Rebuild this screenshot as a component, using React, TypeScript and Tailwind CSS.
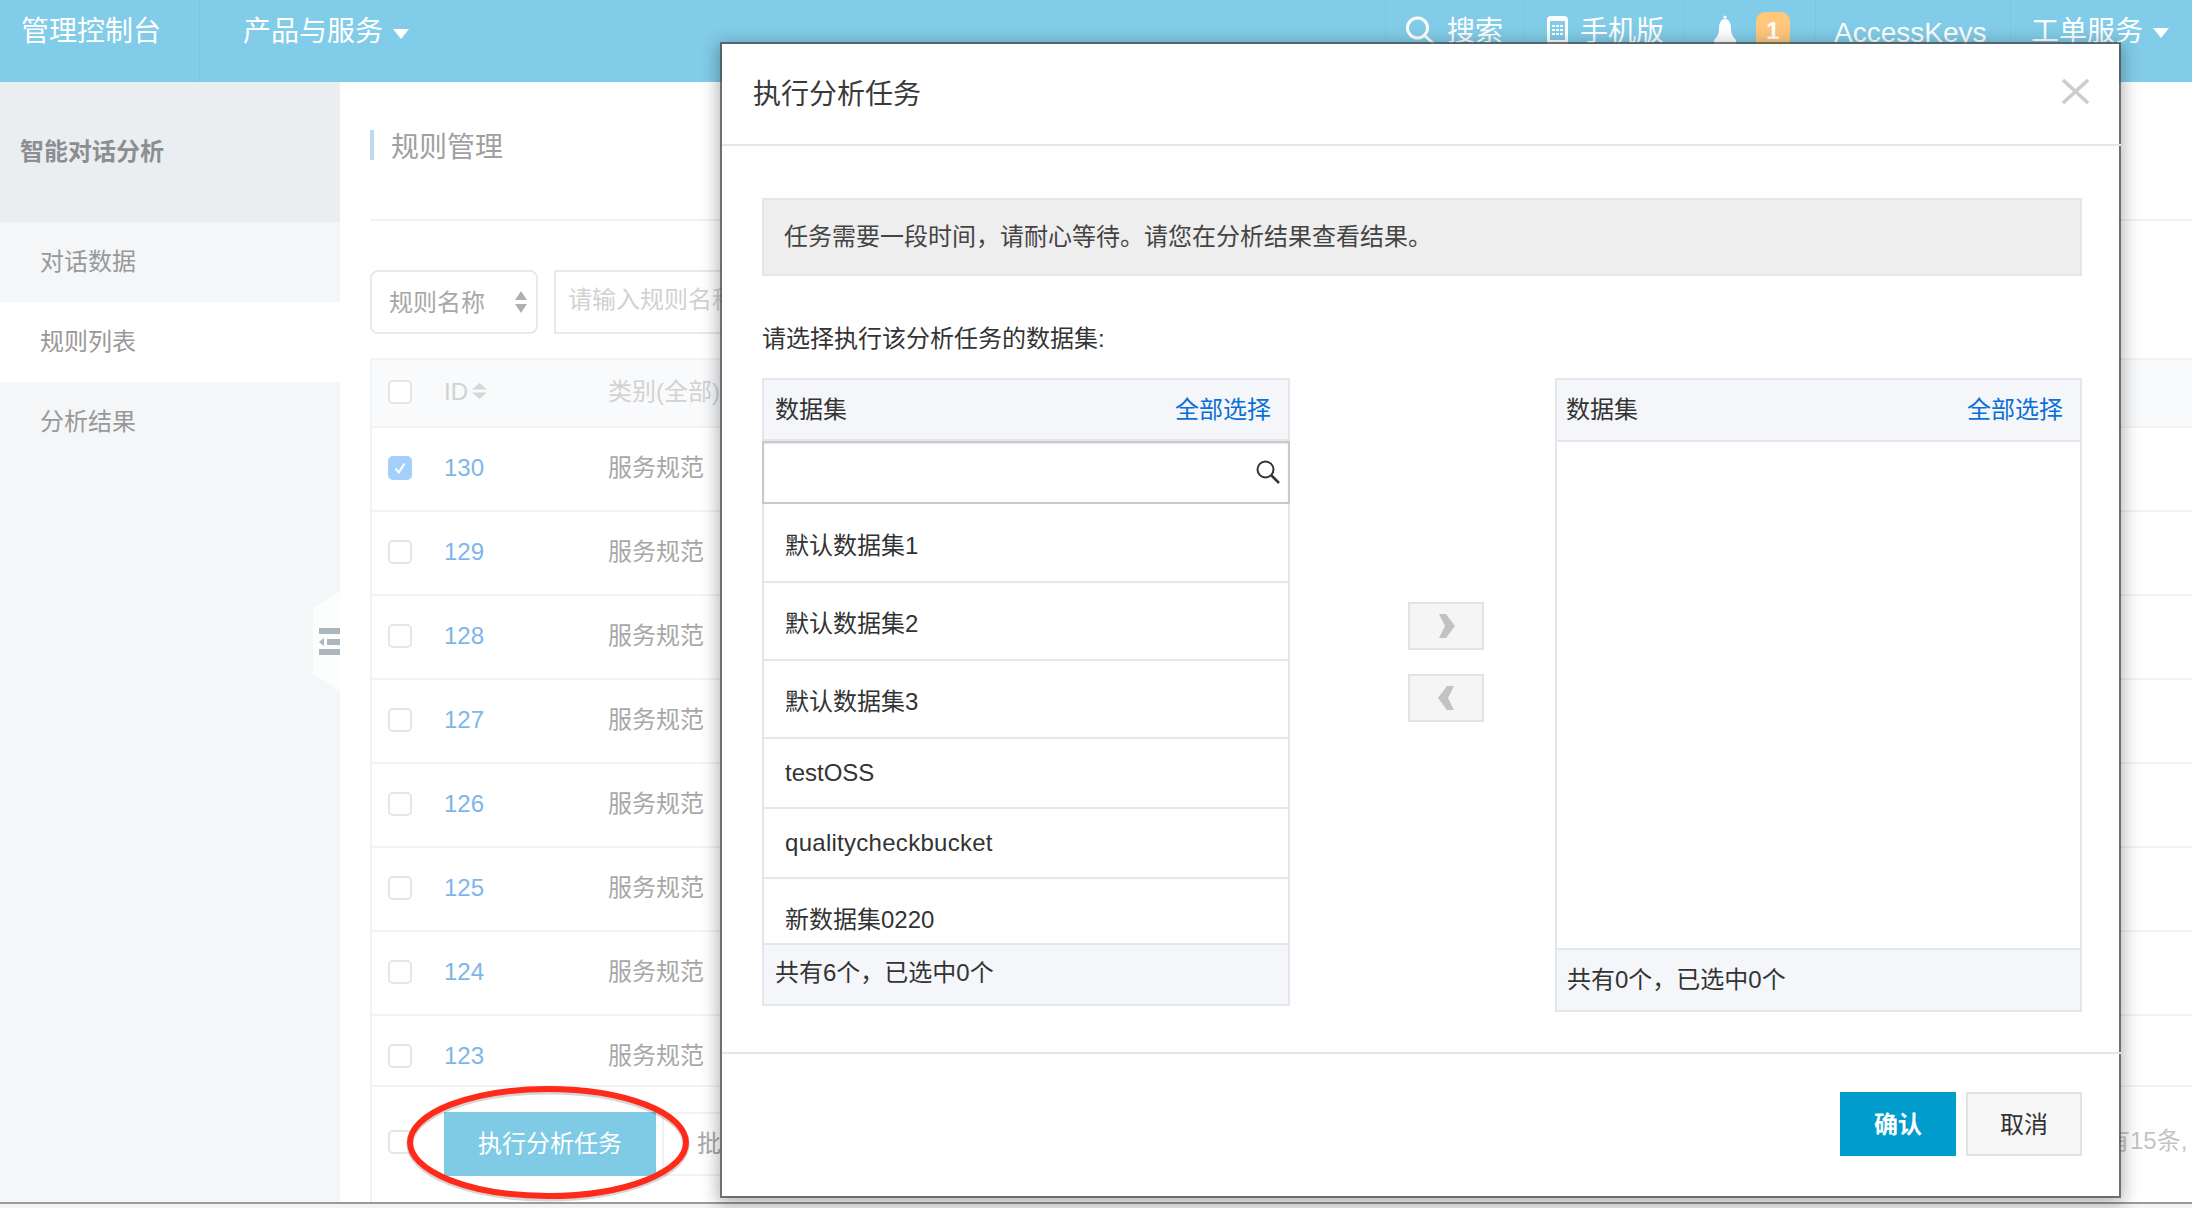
const rows = ["130", "129", "128", "127", "126", "125", "124", "123"]

function Check({ on }: { on?: boolean }) {
    if (on) {
        return (
            <div className="w-6 h-6 rounded-[5px] bg-[#a3cffa] flex items-center justify-center shrink-0">
                <svg width="16" height="16" viewBox="0 0 16 16" fill="none" stroke="#fff" strokeWidth="2">
                    <path d="M3.5 8.5 L6.8 12.5 L12.5 3.5" />
                </svg>
            </div>
        )
    }
    return <div className="w-6 h-6 rounded-[5px] border-2 border-[#e6e6e6] bg-white shrink-0"></div>
}

function Updown({ color, w, h }: { color: string; w: number; h: number }) {
    return (
        <svg width={w} height={h} viewBox="0 0 12 22" preserveAspectRatio="none" fill={color}>
            <path d="M6 0 L12 9 L0 9 Z M0 13 L12 13 L6 22 Z" />
        </svg>
    )
}

function Caret() {
    return (
        <svg width="16" height="10" viewBox="0 0 16 10" fill="#fff">
            <path d="M0 0 L16 0 L8 10 Z" />
        </svg>
    )
}

function TopBar() {
    return (
        <div className="h-[82px] bg-[#81cce8] flex text-white text-[28px] leading-[36px] shrink-0">
            <div className="w-[200px] pl-[21px] pt-[14px] border-r border-[#7bc7e3]">管理控制台</div>
            <div className="pl-[43px] pt-[14px] flex items-start">
                产品与服务
                <div className="ml-[10px] mt-[15px]"><Caret /></div>
            </div>
            <div className="ml-auto flex">
                <div className="w-[138px] pl-[20px] pt-[14px] border-l border-[#7bc7e3] flex items-start">
                    <svg className="mt-[2px]" width="30" height="30" viewBox="0 0 30 30" fill="none" stroke="#fff" strokeWidth="3">
                        <circle cx="11.5" cy="12" r="10" />
                        <path d="M18.5 19.5 L28 28" />
                    </svg>
                    <span className="ml-[11px]">搜索</span>
                </div>
                <div className="w-[160px] pl-[23px] pt-[14px] border-l border-[#7bc7e3] flex items-start">
                    <svg className="mt-[2px]" width="21" height="30" viewBox="0 0 21 30">
                        <rect x="0" y="0" width="21" height="30" rx="4" fill="#fff" />
                        <rect x="3" y="5" width="15" height="19" fill="#81cce8" />
                        <path d="M5 10 H16 M5 14 H16 M5 18 H16" stroke="#fff" strokeWidth="2" strokeDasharray="3 1" />
                    </svg>
                    <span className="ml-[12px]">手机版</span>
                </div>
                <div className="w-[132px] pl-[29px] border-l border-[#7bc7e3] flex items-start">
                    <svg className="mt-[15px]" width="24" height="30" viewBox="0 0 24 30" fill="#fff">
                        <circle cx="12" cy="2" r="1.6" />
                        <path d="M12 4 C7.5 4 6 9 6 14 C6 19 4 22 1 25 L1 30 L23 30 L23 25 C20 22 18 19 18 14 C18 9 16.5 4 12 4 Z" />
                    </svg>
                    <div className="ml-[19px] mt-[12px] w-[34px] h-[36px] rounded-t-[9px] bg-[#ffc77c] text-[24px] font-bold leading-[38px] text-center">1</div>
                </div>
                <div className="w-[195px] pl-[18px] pt-[15px] border-l border-[#7bc7e3]">AccessKeys</div>
                <div className="w-[182px] pl-[20px] pt-[14px] border-l border-[#7bc7e3] flex items-start">
                    工单服务
                    <div className="ml-[10px] mt-[14px]"><Caret /></div>
                </div>
            </div>
        </div>
    )
}

function Sidebar() {
    return (
        <div className="w-[340px] bg-[#f4f6f8] text-[24px] text-[#999999] shrink-0">
            <div className="h-[140px] bg-[#ebeef1] pl-[20px] flex items-center font-bold text-[#8c8f92]">智能对话分析</div>
            <div className="h-20 pl-10 flex items-center">对话数据</div>
            <div className="h-20 pl-10 flex items-center bg-white">规则列表</div>
            <div className="h-20 pl-10 flex items-center">分析结果</div>
        </div>
    )
}

function MainPage() {
    return (
        <div className="flex-1 min-w-0 bg-white pl-[30px] text-[24px] text-[#a8a8a8]">
            <div className="h-[139px] pt-[48px] border-b-2 border-[#f0f1f2]">
                <div className="h-[30px] border-l-4 border-[#bcd9ef] pl-[17px] text-[28px] leading-[35px] text-[#a0a0a0]">规则管理</div>
            </div>
            <div className="flex mt-[49px] gap-4 h-16">
                <div className="w-[168px] rounded-lg border-2 border-[#e8e9ea] pl-[17px] pr-[9px] flex items-center justify-between">
                    <span className="pt-[2px]">规则名称</span>
                    <Updown color="#b0b0b0" w={12} h={22} />
                </div>
                <div className="w-[300px] border-2 border-[#e8e9ea] pl-3 pb-1 flex items-center text-[#d2d2d2]">请输入规则名称</div>
            </div>
            <div className="mt-6 border-l-2 border-[#f1f3f5]">
                <div className="h-[70px] bg-[#f9fafb] border-y-2 border-[#f1f3f5] pl-4 pt-5 flex items-start text-[#d2d2d2]">
                    <Check />
                    <span className="w-[164px] ml-[32px] flex items-center h-6">
                        ID
                        <span className="ml-[4px] mb-[2px]"><Updown color="#d6d6d6" w={15} h={16} /></span>
                    </span>
                    <span className="h-6 leading-6">类别(全部)</span>
                </div>
                {rows.map((id, i) => (
                    <div key={id} className={(i == 7 ? "h-[71px]" : "h-[84px]") + " border-b-2 border-[#f1f3f5] pl-4 pt-[28px] flex items-start"}>
                        <Check on={i == 0} />
                        <span className="w-[164px] ml-[32px] h-6 leading-6 text-[#7db6ea]">{id}</span>
                        <span className="h-6 leading-6">服务规范</span>
                    </div>
                ))}
                <div className="h-[115px] pl-4 pt-[25px] flex items-start">
                    <div className="mt-[18px]"><Check /></div>
                    <button className="ml-8 w-[212px] h-16 bg-[#7fcbe6] text-white">执行分析任务</button>
                    <button className="ml-[6px] h-16 border-2 border-[#f1f2f3] px-[33px] text-[#a8a8a8]">批量删除</button>
                    <span className="ml-auto mt-[17px] w-[110px] h-6 leading-6 whitespace-nowrap text-[#c4c4c4]">共有15条,</span>
                </div>
            </div>
        </div>
    )
}

function ListHead({ h, pl }: { h: string; pl: string }) {
    return (
        <div className={h + " " + pl + " bg-[#f4f6f9] border-b-2 border-[#e3e6ea] pr-[17px] flex items-center justify-between shrink-0"}>
            <span>数据集</span>
            <span className="text-[#0a6fd6]">全部选择</span>
        </div>
    )
}

function Modal() {
    const items = [
        { name: "默认数据集1", cls: "h-[79px] flex items-center border-b-2 pt-[6px]" },
        { name: "默认数据集2", cls: "h-[78px] flex items-center border-b-2 pt-[6px]" },
        { name: "默认数据集3", cls: "h-[78px] flex items-center border-b-2 pt-[6px]" },
        { name: "testOSS", cls: "h-[70px] flex items-center border-b-2" },
        { name: "qualitycheckbucket", cls: "h-[70px] flex items-center border-b-2 tracking-[0.28px]" },
        { name: "新数据集0220", cls: "h-[78px] pt-[23px]" },
    ]
    return (
        <div className="absolute left-[722px] top-[44px] w-[1397px] h-[1152px] bg-white text-[24px] text-[#333333] shadow-[0_0_0_2px_rgba(70,70,70,0.7),0_4px_16px_4px_rgba(0,0,0,0.3)]">
            <div className="h-[102px] border-b-2 border-[#e5e6e8] pl-[31px] pr-[30px] flex items-center justify-between -mr-[2px]">
                <span className="text-[28px] text-[#3a3a3a] pt-[2px]">执行分析任务</span>
                <svg className="mr-[2px] -mt-[5px]" width="27" height="25" viewBox="0 0 27 25" fill="none" stroke="#cccccc" strokeWidth="3.5">
                    <path d="M1 1 L26 24 M26 1 L1 24" />
                </svg>
            </div>
            <div className="h-[908px] pl-10 pr-[39px] pt-[52px] border-b-2 border-[#e5e6e8] -mr-[2px]">
                <div className="h-[78px] bg-[#eeeeee] border-2 border-[#e3e6ea] pl-5 flex items-center text-[#444444]">任务需要一段时间，请耐心等待。请您在分析结果查看结果。</div>
                <div className="mt-[48px] h-[30px] leading-[30px]">请选择执行该分析任务的数据集:</div>
                <div className="mt-[24px] flex items-start">
                    <div className="w-[528px] h-[628px] border-2 border-[#e3e6ea] flex flex-col">
                        <ListHead h="h-[61px]" pl="pl-[11px]" />
                        <div className="h-[63px] -mx-[2px] border-2 border-[#c9c9c9] flex items-center justify-end pr-[8px] pb-[2px] shadow-[inset_0_1px_2px_rgba(0,0,0,0.1)] shrink-0">
                            <svg width="24" height="24" viewBox="0 0 24 24" fill="none" stroke="#333" strokeWidth="2">
                                <circle cx="9.5" cy="9.5" r="8" />
                                <path d="M15.5 15.5 L23 23" strokeWidth="2.5" />
                            </svg>
                        </div>
                        <div className="h-[439px] overflow-hidden shrink-0">
                            {items.map((item) => (
                                <div key={item.name} className={item.cls + " pl-[21px] border-[#e3e6ea]"}>
                                    {item.name}
                                </div>
                            ))}
                        </div>
                        <div className="flex-1 bg-[#f4f6f9] border-t-2 border-[#e3e6ea] pl-[11px] pb-[4px] flex items-center">共有6个，已选中0个</div>
                    </div>
                    <div className="w-[265px] flex flex-col items-start pt-[224px] pl-[118px]">
                        <div className="w-[76px] h-12 bg-[#f5f5f5] border-2 border-[#e2e2e2] flex items-center justify-center">
                            <svg width="17" height="24" viewBox="0 0 17 24" fill="#c2c2c2"><path d="M1 0 L8 0 L17 12 L8 24 L1 24 L7 12 Z" /></svg>
                        </div>
                        <div className="mt-6 w-[76px] h-12 bg-[#f5f5f5] border-2 border-[#e2e2e2] flex items-center justify-center">
                            <svg width="17" height="24" viewBox="0 0 17 24" fill="#c2c2c2"><path d="M16 0 L9 0 L0 12 L9 24 L16 24 L10 12 Z" /></svg>
                        </div>
                    </div>
                    <div className="w-[527px] h-[634px] border-2 border-[#e3e6ea] flex flex-col">
                        <ListHead h="h-[62px]" pl="pl-[9px]" />
                        <div className="h-[506px]"></div>
                        <div className="flex-1 bg-[#f4f6f9] border-t-2 border-[#e3e6ea] pl-[10px] flex items-center">共有0个，已选中0个</div>
                    </div>
                </div>
            </div>
            <div className="flex justify-end gap-[10px] pt-[38px] pr-[37px]">
                <button className="w-[116px] h-16 bg-[#009ccc] text-white font-bold pt-[2px]">确认</button>
                <button className="w-[116px] h-16 bg-[#f7f7f7] border-2 border-[#e2e2e2] text-[#333333] pt-[2px]">取消</button>
            </div>
        </div>
    )
}

export default function App() {
    return (
        <div className="relative w-[2192px] h-[1208px] overflow-hidden bg-[#f1f3f5] flex flex-col font-['Liberation_Sans','Noto_Sans_CJK_SC',sans-serif]">
            <TopBar />
            <div className="h-[1120px] flex shrink-0 overflow-hidden">
                <Sidebar />
                <MainPage />
            </div>
            <div className="h-[2px] bg-[#9a9a9a]"></div>

            <div className="absolute left-[313px] top-[591px] w-[27px] h-[100px] bg-[#fcfdfd] [clip-path:polygon(100%_0,100%_100%,0_83%,0_17%)] overflow-hidden">
                <svg className="absolute left-[6px] top-[37px]" width="21" height="27" viewBox="0 0 21 27" fill="#adb5bd">
                    <rect x="0" y="0" width="21" height="6" />
                    <rect x="8" y="11" width="13" height="6" />
                    <path d="M0 14 L5 10 L5 18 Z" />
                    <rect x="0" y="21" width="21" height="6" />
                </svg>
            </div>

            <svg className="absolute left-[405px] top-[1083px]" width="288" height="122" viewBox="0 0 288 122" fill="none">
                <ellipse cx="143" cy="61.5" rx="138" ry="53.5" stroke="rgba(0,0,0,0.16)" strokeWidth="7" />
                <ellipse cx="143" cy="59.5" rx="138" ry="53.5" stroke="#ff2a1a" strokeWidth="6" />
            </svg>

            <Modal />
        </div>
    )
}
